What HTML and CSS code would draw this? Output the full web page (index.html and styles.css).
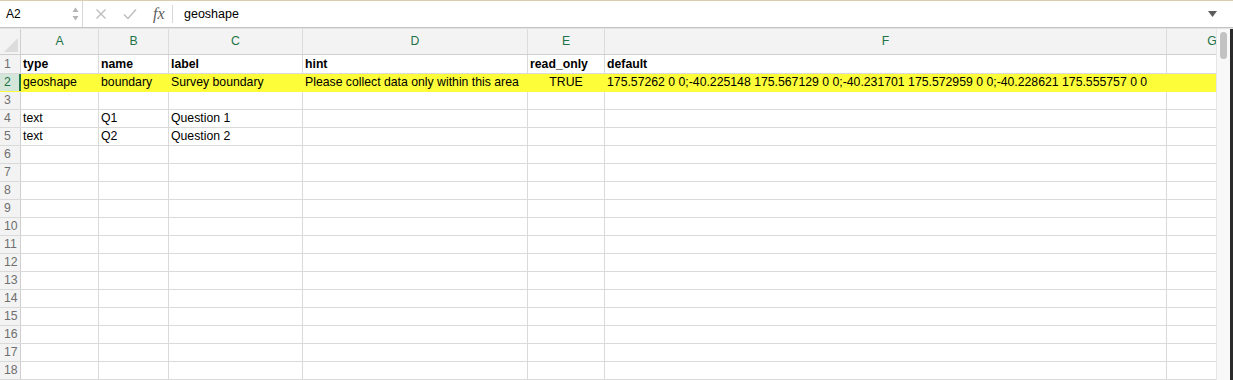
FILE: index.html
```html
<!DOCTYPE html>
<html lang="en">
<head>
    <meta charset="UTF-8">
    <title>Survey sheet</title>
    <link rel="stylesheet" href="styles.css">
</head>
<body>
    <div class="formula-bar">
        <div class="name-box">
            <span>A2</span>
            <span class="spinner">
                <svg width="7" height="16" viewBox="0 0 7 16">
                    <path d="M0.5 6 L3.5 1.5 L6.5 6 Z" fill="#b4b4b4"/>
                    <path d="M0.5 10 L3.5 14.5 L6.5 10 Z" fill="#b4b4b4"/>
                </svg>
            </span>
        </div>
        <div class="tools">
            <svg class="tool-icon" width="12" height="12" viewBox="0 0 12 12">
                <path d="M1.5 1.5 L10.5 10.5 M10.5 1.5 L1.5 10.5" stroke="#bdbdbd" stroke-width="1.4" fill="none"/>
            </svg>
            <svg class="tool-icon check" width="14" height="12" viewBox="0 0 14 12">
                <path d="M1 6.5 L5 10.5 L13 1.5" stroke="#bdbdbd" stroke-width="1.4" fill="none"/>
            </svg>
            <span class="fx">fx</span>
            <span class="divider"></span>
        </div>
        <div class="formula-input">geoshape</div>
        <div class="expand">
            <svg width="9" height="6" viewBox="0 0 9 6"><path d="M0 0 L9 0 L4.5 6 Z" fill="#5a5a5a"/></svg>
        </div>
    </div>

    <div class="sheet">
        <div class="grid">
            <div class="row head">
                <div class="cell rn corner"></div>
                <div class="cell a">A</div><div class="cell b">B</div><div class="cell c">C</div><div class="cell d">D</div><div class="cell e">E</div><div class="cell f">F</div><div class="cell g">G</div>
            </div>
            <div class="row first">
                <div class="cell rn">1</div>
                <div class="cell a bold">type</div><div class="cell b bold">name</div><div class="cell c bold">label</div><div class="cell d bold">hint</div><div class="cell e bold">read_only</div><div class="cell f bold">default</div><div class="cell g"></div>
            </div>
            <div class="row filled">
                <div class="cell rn active">2</div>
                <div class="cell a">geoshape</div><div class="cell b">boundary</div><div class="cell c">Survey boundary</div><div class="cell d">Please collect data only within this area</div><div class="cell e center">TRUE</div><div class="cell f">175.57262 0 0;-40.225148 175.567129 0 0;-40.231701 175.572959 0 0;-40.228621 175.555757 0 0</div><div class="cell g"></div>
            </div>
            <div class="row"><div class="cell rn">3</div><div class="cell a"></div><div class="cell b"></div><div class="cell c"></div><div class="cell d"></div><div class="cell e"></div><div class="cell f"></div><div class="cell g"></div></div>
            <div class="row"><div class="cell rn">4</div><div class="cell a">text</div><div class="cell b">Q1</div><div class="cell c">Question 1</div><div class="cell d"></div><div class="cell e"></div><div class="cell f"></div><div class="cell g"></div></div>
            <div class="row"><div class="cell rn">5</div><div class="cell a">text</div><div class="cell b">Q2</div><div class="cell c">Question 2</div><div class="cell d"></div><div class="cell e"></div><div class="cell f"></div><div class="cell g"></div></div>
            <div class="row"><div class="cell rn">6</div><div class="cell a"></div><div class="cell b"></div><div class="cell c"></div><div class="cell d"></div><div class="cell e"></div><div class="cell f"></div><div class="cell g"></div></div>
            <div class="row"><div class="cell rn">7</div><div class="cell a"></div><div class="cell b"></div><div class="cell c"></div><div class="cell d"></div><div class="cell e"></div><div class="cell f"></div><div class="cell g"></div></div>
            <div class="row"><div class="cell rn">8</div><div class="cell a"></div><div class="cell b"></div><div class="cell c"></div><div class="cell d"></div><div class="cell e"></div><div class="cell f"></div><div class="cell g"></div></div>
            <div class="row"><div class="cell rn">9</div><div class="cell a"></div><div class="cell b"></div><div class="cell c"></div><div class="cell d"></div><div class="cell e"></div><div class="cell f"></div><div class="cell g"></div></div>
            <div class="row"><div class="cell rn">10</div><div class="cell a"></div><div class="cell b"></div><div class="cell c"></div><div class="cell d"></div><div class="cell e"></div><div class="cell f"></div><div class="cell g"></div></div>
            <div class="row"><div class="cell rn">11</div><div class="cell a"></div><div class="cell b"></div><div class="cell c"></div><div class="cell d"></div><div class="cell e"></div><div class="cell f"></div><div class="cell g"></div></div>
            <div class="row"><div class="cell rn">12</div><div class="cell a"></div><div class="cell b"></div><div class="cell c"></div><div class="cell d"></div><div class="cell e"></div><div class="cell f"></div><div class="cell g"></div></div>
            <div class="row"><div class="cell rn">13</div><div class="cell a"></div><div class="cell b"></div><div class="cell c"></div><div class="cell d"></div><div class="cell e"></div><div class="cell f"></div><div class="cell g"></div></div>
            <div class="row"><div class="cell rn">14</div><div class="cell a"></div><div class="cell b"></div><div class="cell c"></div><div class="cell d"></div><div class="cell e"></div><div class="cell f"></div><div class="cell g"></div></div>
            <div class="row"><div class="cell rn">15</div><div class="cell a"></div><div class="cell b"></div><div class="cell c"></div><div class="cell d"></div><div class="cell e"></div><div class="cell f"></div><div class="cell g"></div></div>
            <div class="row"><div class="cell rn">16</div><div class="cell a"></div><div class="cell b"></div><div class="cell c"></div><div class="cell d"></div><div class="cell e"></div><div class="cell f"></div><div class="cell g"></div></div>
            <div class="row"><div class="cell rn">17</div><div class="cell a"></div><div class="cell b"></div><div class="cell c"></div><div class="cell d"></div><div class="cell e"></div><div class="cell f"></div><div class="cell g"></div></div>
            <div class="row"><div class="cell rn">18</div><div class="cell a"></div><div class="cell b"></div><div class="cell c"></div><div class="cell d"></div><div class="cell e"></div><div class="cell f"></div><div class="cell g"></div></div>
        </div>
        <div class="scrollbar">
            <div class="thumb"></div>
        </div>
        <div class="edge"></div>
    </div>
</body>
</html>
```

FILE: styles.css
```css
:root {
    --grid: #dadada;
    --head-bg: #f3f3f3;
    --green: #217346;
    --yellow: #fdfd3a;
}

body {
    margin: 0;
    font-family: 'Liberation Sans', Arial, sans-serif;
    font-size: 12.25px;
    color: #000;
    background: #fff;
    overflow: hidden;
}

/* formula bar */
.formula-bar {
    display: flex;
    height: 26px;
    border-top: 1px solid #d8cfb2;
    border-bottom: 1px solid #c3c3c3;
}

.name-box {
    width: 83px;
    box-sizing: border-box;
    display: flex;
    align-items: center;
    justify-content: space-between;
    padding: 0 3px 0 6px;
    border-right: 1px solid #d6d6d6;
    font-size: 12px;
}

.spinner {
    display: flex;
    align-items: center;
}

.tools {
    width: 94px;
    display: flex;
    align-items: center;
    padding-left: 12px;
    box-sizing: border-box;
}

.tool-icon {
    margin-right: 16px;
}

.tool-icon.check {
    margin-right: 16px;
}

.fx {
    font-family: 'Liberation Serif', 'Times New Roman', serif;
    font-style: italic;
    font-size: 16px;
    color: #5e5e5e;
    margin-right: 7px;
}

.divider {
    width: 1px;
    height: 18px;
    background: #d6d6d6;
}

.formula-input {
    flex: 1;
    display: flex;
    align-items: center;
    padding-left: 7px;
    font-size: 12.5px;
}

.expand {
    width: 30px;
    display: flex;
    align-items: center;
    padding-left: 5px;
    box-sizing: border-box;
}

/* sheet */
.sheet {
    display: flex;
    border-top: 1px solid #e4e4e4;
}

.grid {
    width: 1216px;
    overflow: hidden;
}

.row {
    display: flex;
    height: 17px;
    border-bottom: 1px solid var(--grid);
}

.row.head {
    height: 25px;
    background: var(--head-bg);
    border-bottom-color: #cfcfcf;
}

.row.first {
    height: 18px;
}

.cell {
    flex: none;
    box-sizing: border-box;
    border-right: 1px solid var(--grid);
    padding-left: 2px;
    line-height: 17px;
    white-space: nowrap;
    overflow: hidden;
}

.first .cell {
    line-height: 18px;
}

.rn { width: 21px; padding-left: 4px; color: #6f6f6f; border-right-color: #cfcfcf; background: var(--head-bg); }
.a { width: 78px; }
.b { width: 70px; }
.c { width: 134px; }
.d { width: 225px; }
.e { width: 77px; }
.f { width: 562px; }
.g { width: 90px; border-right: none; }

.head .cell {
    line-height: 25px;
    text-align: center;
    color: var(--green);
    padding-left: 0;
    border-right-color: #dcdcdc;
}

.head .corner {
    position: relative;
    border-right-color: #cfcfcf;
}

.head .corner::after {
    content: "";
    position: absolute;
    right: 2px;
    bottom: 2px;
    border-style: solid;
    border-width: 0 0 14px 14px;
    border-color: transparent transparent #dcdcdc transparent;
}

.bold {
    font-weight: bold;
}

.center {
    text-align: center;
    padding-left: 0;
}

.filled {
    background: var(--yellow);
    border-bottom-color: var(--yellow);
}

.filled .cell {
    border-right-color: var(--yellow);
}

.filled .rn.active {
    background: #d4e5d9;
    color: var(--green);
    border-right: 2px solid var(--green);
}

/* scroll bar */
.scrollbar {
    width: 14px;
    background: #f8f8f8;
    border-left: 1px solid #e6e6e6;
    padding: 3px 3px 0 3px;
    box-sizing: border-box;
}

.thumb {
    height: 27px;
    background: #c2c2c2;
    border-radius: 4px;
}

.edge {
    width: 3px;
    background: #2a2a2a;
}
```
